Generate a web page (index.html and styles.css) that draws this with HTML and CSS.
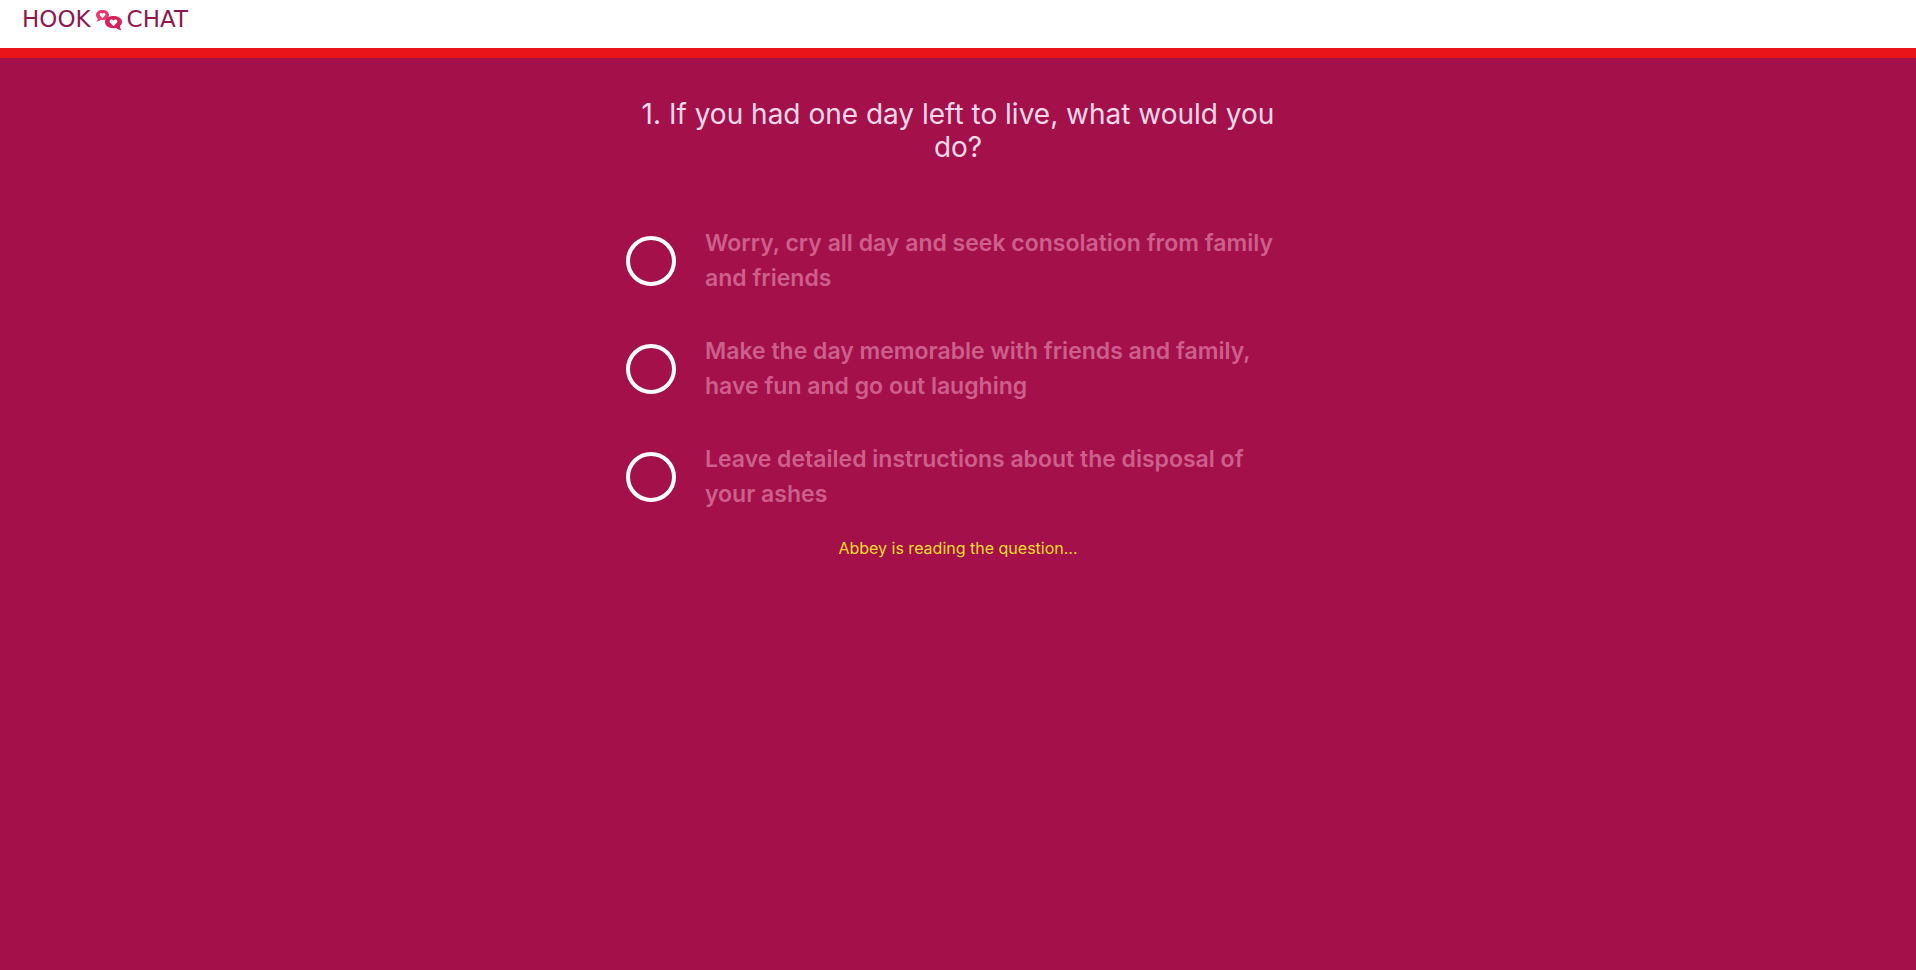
FILE: index.html
```html
<!DOCTYPE html>
<html lang="en">
<head>
<meta charset="utf-8">
<meta name="viewport" content="width=device-width, initial-scale=1">
<title>Hook Chat</title>
<link rel="stylesheet" href="styles.css">
</head>
<body>
<header class="topbar">
  <a class="logo" href="#" aria-label="Hook Chat">
    <span>HOOK</span>
    <svg class="logo-icon" viewBox="0 0 28 22" aria-hidden="true">
      <path fill="#e83a6c" d="M7.5 1C11.5 1 14 3.100 14 6S11.500 11 7.500 11L6 10.800Q4 12.500 1.500 12.500Q3 11 2.600 9.500Q1 8 1 6C1 3.100 3.500 1 7.500 1Z"/>
      <path fill="#fff" d="M7.500 9.200L5 6.500C3.600 4.500 6 2.900 7.500 4.700C9 2.900 11.400 4.500 10 6.500Z"/>
      <path fill="#dc1f5b" d="M18.500 7C23.500 7 27 9.500 27 13Q27 15.500 25 17Q24.800 19.500 26.500 21.300Q23 21 21 19L18.500 19.200C13.500 19.200 10 16.600 10 13S13.500 7 18.500 7Z"/>
      <path fill="#fff" d="M18.500 17.200L15.200 13.700C13.300 11.200 16.500 9.200 18.500 11.500C20.500 9.200 23.700 11.200 21.800 13.700Z"/>
    </svg>
    <span>CHAT</span>
  </a>
</header>
<main class="quiz">
  <h1 class="question">1. If you had one day left to live, what would you do?</h1>
  <form class="options">
    <label class="option"><input class="radio" type="radio" name="answer"><span>Worry, cry all day and seek consolation from family and friends</span></label>
    <label class="option"><input class="radio" type="radio" name="answer"><span>Make the day memorable with friends and family, have fun and go out laughing</span></label>
    <label class="option"><input class="radio" type="radio" name="answer"><span>Leave detailed instructions about the disposal of your ashes</span></label>
  </form>
  <p class="status" role="status">Abbey is reading the question...</p>
</main>
</body>
</html>
```
FILE: styles.css
```css
* {
  box-sizing: border-box;
}

body {
  margin: 0;
  min-height: 100vh;
  background: #a4104a;
  font-family: Inter, "Liberation Sans", sans-serif;
}

.topbar {
  display: flex;
  height: 58px;
  padding: 5px 22px;
  background: #fff;
  border-bottom: 10px solid #e8141a;
}

.logo {
  display: flex;
  align-items: center;
  gap: 4px;
  height: 29px;
  color: #8e1850;
  font: 23px/29px "DejaVu Sans", sans-serif;
  text-decoration: none;
}

.logo-icon {
  width: 28px;
  height: 22px;
}

.quiz {
  max-width: 668px;
  margin: 0 auto;
  padding-top: 40px;
}

.question {
  margin: 0;
  padding: 0 10px;
  color: #fbd9ea;
  font-size: 28px;
  font-weight: 400;
  line-height: 33px;
  text-align: center;
}

.options {
  display: grid;
  gap: 38px;
  margin-top: 62px;
}

.option {
  display: flex;
  align-items: center;
  gap: 29px;
  padding: 0 2px;
  color: #cd5f8c;
  font-size: 23px;
  font-weight: 600;
  line-height: 35px;
  cursor: pointer;
}

.radio {
  appearance: none;
  flex: none;
  width: 50px;
  height: 50px;
  margin: 0;
  border: 4px solid #fff;
  border-radius: 50%;
  cursor: pointer;
}

.radio:checked {
  background: #fff;
  box-shadow: inset 0 0 0 8px #a4104a;
}

.status {
  margin: 26px 0 0;
  color: #f6dc2c;
  font-size: 16px;
  line-height: 20px;
  text-align: center;
}
```
